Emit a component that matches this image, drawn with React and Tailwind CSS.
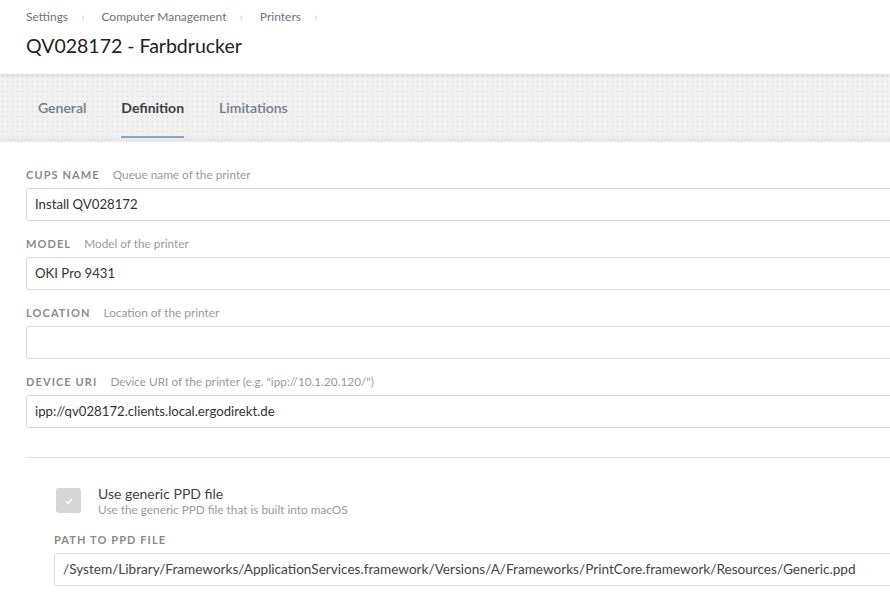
const fields = [
  { label: 'CUPS NAME', desc: 'Queue name of the printer', value: 'Install QV028172' },
  { label: 'MODEL', desc: 'Model of the printer', value: 'OKI Pro 9431' },
  { label: 'LOCATION', desc: 'Location of the printer', value: '' },
  { label: 'DEVICE URI', desc: 'Device URI of the printer (e.g. "ipp://10.1.20.120/")', value: 'ipp://qv028172.clients.local.ergodirekt.de' },
]

function Field({ label, desc, value }) {
  return (
    <div className="mb-[17px]">
      <div className="flex items-center gap-[13px] h-[12px] mb-[7px]">
        <span className="text-[11px] font-bold tracking-[0.1em] text-[#8a8a8a]">{label}</span>
        <span className="text-[11.8px] text-[#9a9a9a]">{desc}</span>
      </div>
      <div className="h-[33px] border border-[#d9d9d9] rounded-[3px] flex items-center px-[8px] text-[13.2px] text-[#333]">
        {value}
      </div>
    </div>
  )
}

function Chevron() {
  return <span className="ml-[13px] mr-[17px] text-[#c4c8cc]">›</span>
}

export default function App() {
  return (
    <div className="w-[890px] h-[599px] overflow-hidden bg-white" style={{ fontFamily: 'Lato, "Open Sans", sans-serif' }}>
      <header className="relative z-10 h-[74px] bg-white shadow-[0_1px_4px_rgba(0,0,0,0.12)] pl-[26px] pt-[10px]">
        <nav className="flex items-center text-[12px] text-[#6b7480] h-[14px]">
          <span>Settings</span>
          <Chevron />
          <span>Computer Management</span>
          <Chevron />
          <span>Printers</span>
          <Chevron />
        </nav>
        <h1 className="mt-[7px] text-[19.5px] text-[#222]">QV028172 - Farbdrucker</h1>
      </header>

      <div className="h-[68px] bg-[#f2f2f2] bg-[radial-gradient(#e6e6e6_1px,transparent_1.2px)] bg-[size:5px_5px] border-b-[4px] border-[#e8e8e8] flex items-end pl-[38px] gap-[35px]">
        <button className="h-[50px] pb-[12px] text-[14px] font-semibold text-[#6e7d8c]">General</button>
        <button className="h-[50px] pb-[10px] text-[14px] font-bold text-[#3a3f45] border-b-2 border-[#8fa5b8]">Definition</button>
        <button className="h-[50px] pb-[12px] text-[14px] font-semibold text-[#6e7d8c]">Limitations</button>
      </div>

      <main className="pl-[26px] -mr-[20px] pt-[27px]">
        {fields.map(f => (
          <Field key={f.label} {...f} />
        ))}

        <div className="border-t border-[#e2e2e2] mt-[29px] pl-[28px] pt-[30px]">
          <div className="flex items-start gap-[17px] pl-[2px]">
            <div className="w-[25px] h-[25px] rounded-[3px] bg-[#d6d6d6] flex items-center justify-center">
              <svg width="10" height="10" viewBox="0 0 10 10" fill="none" stroke="white" strokeWidth="1.3">
                <path d="M2 5.2 L4 7.2 L8 2.8" />
              </svg>
            </div>
            <div className="-mt-[3px]">
              <div className="text-[14px] leading-[18px] text-[#444]">Use generic PPD file</div>
              <div className="text-[11.8px] leading-[14px] text-[#9a9a9a]">Use the generic PPD file that is built into macOS</div>
            </div>
          </div>
          <div className="mt-[17px] h-[12px] flex items-center text-[11px] font-bold tracking-[0.1em] text-[#8a8a8a]">PATH TO PPD FILE</div>
          <div className="mt-[7px] h-[33px] border border-[#d9d9d9] rounded-[3px] flex items-center px-[8px] text-[13.6px] text-[#444] whitespace-nowrap">
            /System/Library/Frameworks/ApplicationServices.framework/Versions/A/Frameworks/PrintCore.framework/Resources/Generic.ppd
          </div>
        </div>
      </main>
    </div>
  )
}
